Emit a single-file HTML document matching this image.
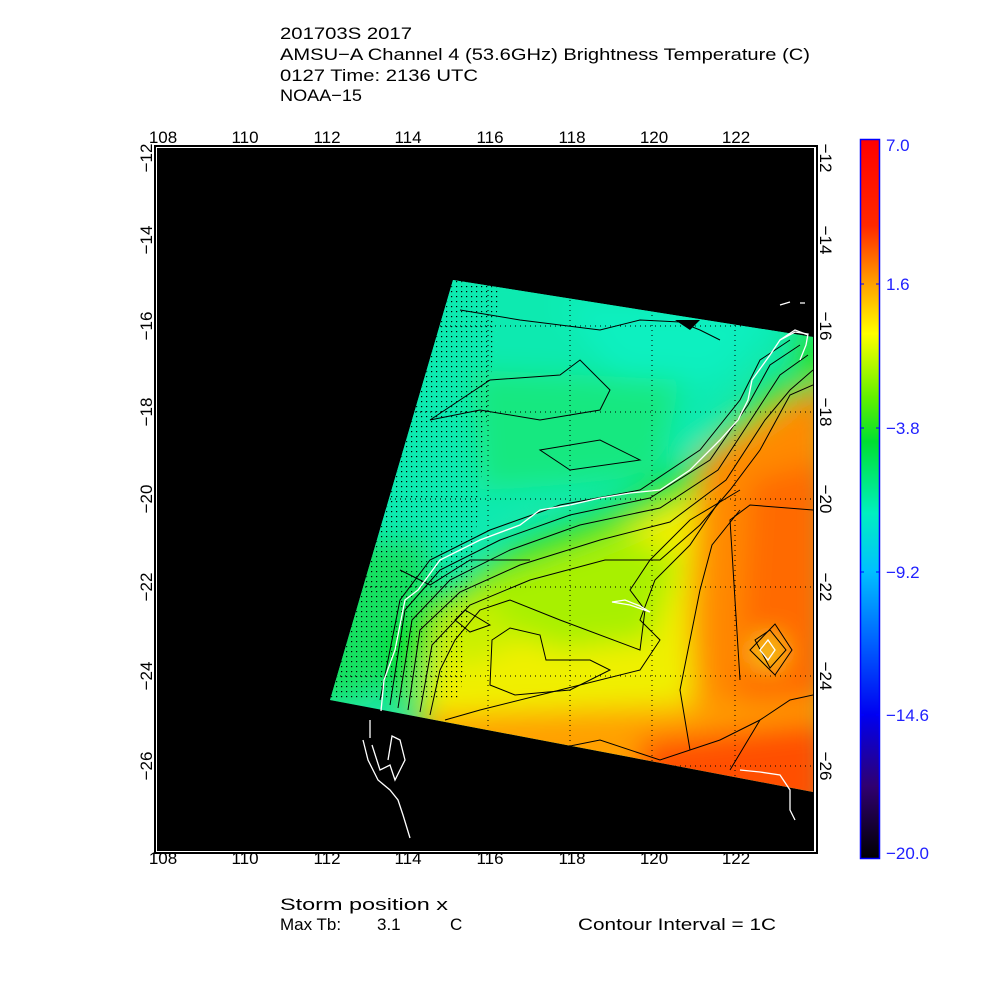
<!DOCTYPE html>
<html><head><meta charset="utf-8"><style>
html,body{margin:0;padding:0;background:#fff;}
svg{display:block;}
text{font-family:"Liberation Sans",sans-serif;}
</style></head><body>
<svg width="1000" height="1000" viewBox="0 0 1000 1000" xmlns="http://www.w3.org/2000/svg">
<defs>
<clipPath id="dc"><polygon points="453,280 813,337 813,792 330,700"/></clipPath>
<filter id="bl" x="-20%" y="-20%" width="140%" height="140%"><feGaussianBlur stdDeviation="14"/></filter>
<linearGradient id="cb" x1="0" y1="0" x2="0" y2="1">
<stop offset="0" stop-color="#ff0000"/>
<stop offset="0.12" stop-color="#ff2800"/>
<stop offset="0.2" stop-color="#ffa000"/>
<stop offset="0.27" stop-color="#ffff00"/>
<stop offset="0.36" stop-color="#60f000"/>
<stop offset="0.42" stop-color="#00e030"/>
<stop offset="0.52" stop-color="#00f0c0"/>
<stop offset="0.6" stop-color="#00c0ff"/>
<stop offset="0.7" stop-color="#0060ff"/>
<stop offset="0.8" stop-color="#0000f0"/>
<stop offset="0.9" stop-color="#300070"/>
<stop offset="1" stop-color="#000000"/>
</linearGradient>
<pattern id="dots" width="5" height="5" patternUnits="userSpaceOnUse"><rect x="1" y="1" width="1.2" height="1.2" fill="#000"/></pattern>
</defs>
<rect width="1000" height="1000" fill="#fff"/>
<g font-size="17" fill="#000">
<text x="280" y="39" textLength="132" lengthAdjust="spacingAndGlyphs">201703S 2017</text>
<text x="280" y="60" textLength="530" lengthAdjust="spacingAndGlyphs">AMSU−A Channel 4 (53.6GHz) Brightness Temperature (C)</text>
<text x="280" y="81" textLength="198" lengthAdjust="spacingAndGlyphs">0127 Time: 2136 UTC</text>
<text x="280" y="101" textLength="82" lengthAdjust="spacingAndGlyphs">NOAA−15</text>
</g>
<rect x="155" y="146" width="662" height="707" fill="#fff" stroke="#000" stroke-width="2"/>
<rect x="157" y="148" width="657" height="703" fill="#000"/>
<g clip-path="url(#dc)">
<rect x="300" y="260" width="530" height="560" fill="#20e8a8"/>
<g filter="url(#bl)">
<polygon points="300,260 830,260 830,330 760,370 700,440 620,495 520,520 420,600 300,700" fill="#10eab0"/>
<polygon points="560,300 780,310 720,380 620,380" fill="#10f0c0"/>
<polygon points="470,370 680,380 660,480 480,490" fill="#18e880"/>
<polygon points="350,540 430,540 440,640 360,700 300,700" fill="#18e060"/>
<polygon points="380,640 430,600 520,540 620,500 700,460 760,390 790,360 790,400 720,480 620,540 500,590 420,660 400,720" fill="#00e030"/>
<polygon points="420,700 440,620 520,570 640,520 720,480 790,400 830,380 830,820 420,820" fill="#f0f000"/>
<polygon points="480,580 620,530 680,560 650,640 560,650 480,620" fill="#a8f000"/>
<polygon points="430,620 480,590 520,640 460,670" fill="#c8f000"/>
<polygon points="700,460 790,400 830,380 830,820 700,820 690,620" fill="#ff8a00"/>
<polygon points="750,480 830,460 830,820 730,820" fill="#ff6a00"/>
<polygon points="420,715 700,705 830,700 830,820 420,820" fill="#ffa000"/>
<polygon points="640,740 830,720 830,820 640,820" fill="#ff5000"/>
<polygon points="790,330 830,320 830,380 800,385" fill="#20e020"/>
<ellipse cx="768" cy="652" rx="14" ry="14" fill="#e8f020"/>
</g>
<polygon points="453,280 500,280 460,700 330,700" fill="url(#dots)"/>
<g stroke="#000" stroke-width="1" stroke-dasharray="1,4">
<line x1="488" y1="260" x2="488" y2="800"/><line x1="570" y1="260" x2="570" y2="800"/>
<line x1="652" y1="260" x2="652" y2="800"/><line x1="735" y1="260" x2="735" y2="800"/>
<line x1="300" y1="326" x2="815" y2="326"/><line x1="300" y1="412" x2="815" y2="412"/>
<line x1="300" y1="499" x2="815" y2="499"/><line x1="300" y1="587" x2="815" y2="587"/>
<line x1="300" y1="676" x2="815" y2="676"/><line x1="300" y1="766" x2="815" y2="766"/>
</g>
<g fill="none" stroke="#000" stroke-width="1">
<path d="M380,700 L400,600 L430,560 L490,530 L560,505 L640,490 L700,450 L740,400 L760,360 L790,340"/>
<path d="M390,705 L405,610 L440,570 L500,540 L570,515 L650,498 L710,460 L748,405 L770,365 L800,345"/>
<path d="M398,708 L412,620 L450,580 L510,550 L580,525 L660,508 L718,470 L756,412 L780,375 L808,355"/>
<path d="M408,710 L420,630 L460,592 L520,565 L600,540 L670,522 L726,480 L765,420 L790,390 L813,370"/>
<path d="M420,712 L432,645 L470,605 L530,580 L605,560 L660,560 L700,525 L730,490 L760,450 L790,395 L813,385"/>
<path d="M430,715 L440,670 L455,640 L480,610 L510,600 L560,620 L640,650 L645,610 L630,590 L650,560 L690,520 L740,490"/>
<path d="M455,620 L465,610 L490,625 L470,632 Z"/>
<path d="M492,640 L510,628 L540,635 L546,660 L590,660 L610,670 L570,690 L515,695 L490,685 Z"/>
<path d="M445,720 L480,710 L560,690 L640,670 L660,640 L640,620 L655,580 L690,545 L720,500"/>
<path d="M500,760 L600,740 L660,760 L720,740 L760,720"/>
<path d="M690,750 L680,690 L690,640 L700,590 L712,545 L740,510"/>
<path d="M740,680 L735,600 L730,520 L750,505 L813,510"/>
<path d="M755,640 L770,630 L786,650 L770,668 Z"/>
<path d="M750,650 L775,624 L792,650 L775,675 Z"/>
<path d="M730,770 L760,720 L790,700 L813,695"/>
<path d="M430,420 L490,380 L560,375 L580,360 L610,390 L600,410 L540,420 L480,410 Z"/>
<path d="M540,450 L600,440 L640,460 L570,470 Z"/>
<path d="M460,310 L520,320 L600,330 L640,320 L680,322 L700,330 L720,340"/>
<path d="M400,570 L430,585 L470,560 L500,560 L530,560"/>
</g>
<path d="M675,320 L690,330 L700,320 Z" fill="#000"/>
</g>
<g fill="none" stroke="#fff" stroke-width="1.3">
<path d="M381,711 L384,680 L395,650 L405,600 L418,590 L440,560 L480,540 L520,525 L540,510 L570,505 L600,498 L630,493 L660,490 L690,470 L720,440 L738,420 L748,400 L752,380 L770,355 L780,340 L795,330 L808,335"/>
<path d="M370,720 L370,738 M363,740 L368,760 L378,780 L390,790 L398,800 L403,815 L410,838 M372,745 L380,770 L390,765 L395,780 L400,770 L405,760 L400,740 L392,736 L388,760"/>
<path d="M612,602 L630,605 L650,612 L640,606 L625,600 Z"/>
<path d="M740,770 L760,772 L780,775 L790,790 L790,810 L795,820 M780,340 L795,332 L808,334 L806,345 L800,360"/>
<path d="M760,650 L768,640 L775,650 L768,660 Z"/>
<path d="M780,305 L790,302 M800,303 L805,303"/>
</g>
<g font-size="17" fill="#000" text-anchor="middle">
<text x="163" y="143">108</text><text x="245" y="143">110</text><text x="327" y="143">112</text><text x="408" y="143">114</text><text x="490" y="143">116</text><text x="572" y="143">118</text><text x="654" y="143">120</text><text x="736" y="143">122</text>
<text x="163" y="864">108</text><text x="245" y="864">110</text><text x="327" y="864">112</text><text x="408" y="864">114</text><text x="490" y="864">116</text><text x="572" y="864">118</text><text x="654" y="864">120</text><text x="736" y="864">122</text>
<g transform="translate(152,158) rotate(-90)"><text>−12</text></g>
<g transform="translate(152,240) rotate(-90)"><text>−14</text></g>
<g transform="translate(152,326) rotate(-90)"><text>−16</text></g>
<g transform="translate(152,412) rotate(-90)"><text>−18</text></g>
<g transform="translate(152,499) rotate(-90)"><text>−20</text></g>
<g transform="translate(152,587) rotate(-90)"><text>−22</text></g>
<g transform="translate(152,676) rotate(-90)"><text>−24</text></g>
<g transform="translate(152,766) rotate(-90)"><text>−26</text></g>
<g transform="translate(820,158) rotate(90)"><text>−12</text></g>
<g transform="translate(820,240) rotate(90)"><text>−14</text></g>
<g transform="translate(820,326) rotate(90)"><text>−16</text></g>
<g transform="translate(820,412) rotate(90)"><text>−18</text></g>
<g transform="translate(820,499) rotate(90)"><text>−20</text></g>
<g transform="translate(820,587) rotate(90)"><text>−22</text></g>
<g transform="translate(820,676) rotate(90)"><text>−24</text></g>
<g transform="translate(820,766) rotate(90)"><text>−26</text></g>
</g>
<rect x="860.5" y="139.5" width="19" height="719" fill="url(#cb)" stroke="#0000ff" stroke-width="1.5"/>
<g font-size="17" fill="#2020ff">
<text x="886" y="151">7.0</text><text x="886" y="290">1.6</text><text x="886" y="434">−3.8</text><text x="886" y="578">−9.2</text><text x="886" y="721">−14.6</text><text x="886" y="859">−20.0</text>
</g>
<g stroke="#0000ff"><line x1="860" y1="284" x2="864" y2="284"/><line x1="876" y1="284" x2="880" y2="284"/><line x1="860" y1="428" x2="864" y2="428"/><line x1="876" y1="428" x2="880" y2="428"/><line x1="860" y1="572" x2="864" y2="572"/><line x1="876" y1="572" x2="880" y2="572"/><line x1="860" y1="715" x2="864" y2="715"/><line x1="876" y1="715" x2="880" y2="715"/></g>
<g font-size="17" fill="#000">
<text x="280" y="910" textLength="168" lengthAdjust="spacingAndGlyphs">Storm position x</text>
<text x="280" y="930">Max Tb:</text><text x="377" y="930">3.1</text><text x="450" y="930">C</text>
<text x="578" y="930" textLength="198" lengthAdjust="spacingAndGlyphs">Contour Interval = 1C</text>
</g>
</svg>
</body></html>
